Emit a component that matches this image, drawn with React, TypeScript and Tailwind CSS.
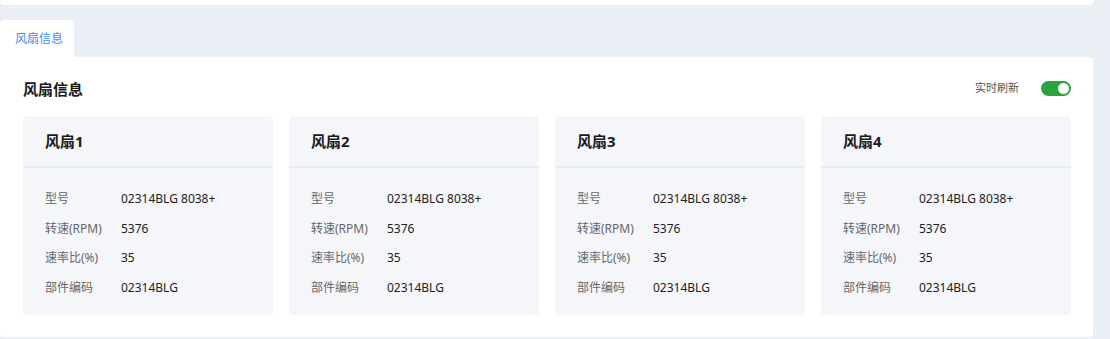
const fans = [1, 2, 3, 4].map((n) => ({
  name: `风扇${n}`,
  rows: [
    ['型号', '02314BLG 8038+'],
    ['转速(RPM)', '5376'],
    ['速率比(%)', '35'],
    ['部件编码', '02314BLG'],
  ],
}));

function Toggle() {
  return (
    <div className="w-[30px] h-[15px] rounded-full bg-[#2ba43e] flex items-center justify-end pr-[2px]">
      <div className="w-[11px] h-[11px] rounded-full bg-white" />
    </div>
  );
}

export default function App() {
  return (
    <div
      className="h-[339px] bg-[#eaeef5] pr-[17px] overflow-hidden"
      style={{ fontFamily: '"Noto Sans", "Noto Sans CJK SC", sans-serif' }}
    >
      <div className="h-[5px] bg-white rounded-b-[4px]" />
      <div className="mt-[15px] w-[74px] h-[37px] bg-white rounded-t-[4px] flex items-center pl-[15px] text-[12px] text-[#3d8ef0]">
        风扇信息
      </div>
      <div className="h-[280px] bg-white rounded-b-[4px] rounded-tr-[4px] pl-[23px] pr-[22px]">
        <div className="h-[59px] flex items-center justify-between pt-[6px]">
          <div className="text-[15px] font-bold text-[#1a1a1a]">风扇信息</div>
          <div className="flex items-center gap-[22px] pb-[3px]">
            <span className="text-[11px] text-[#555]">实时刷新</span>
            <Toggle />
          </div>
        </div>
        <div className="grid grid-cols-4 gap-4">
          {fans.map((fan) => (
            <div key={fan.name} className="h-[199px] bg-[#f4f6fa] rounded-[4px]">
              <div className="h-[52px] flex items-center pl-[22px] border-b-2 border-[#e6eaf2] text-[15px] font-bold text-[#1a1a1a]">
                {fan.name}
              </div>
              <div className="pt-[19px] pl-[22px] flex flex-col gap-[5.5px]">
                {fan.rows.map(([k, v]) => (
                  <div key={k} className="h-[24px] flex items-center text-[12px]">
                    <span className="w-[76px] text-[#666]">{k}</span>
                    <span className="text-[#222]">{v}</span>
                  </div>
                ))}
              </div>
            </div>
          ))}
        </div>
      </div>
    </div>
  );
}
